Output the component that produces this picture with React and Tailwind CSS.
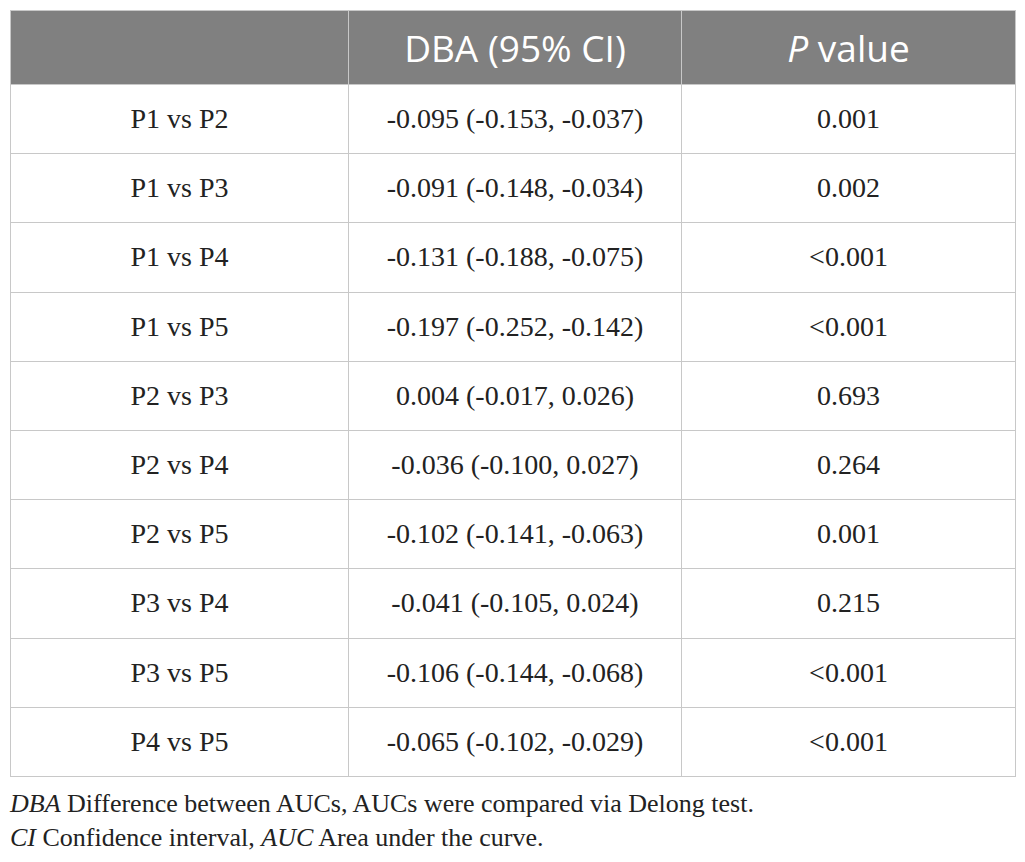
import React from "react";

const rows = [
  ["P1 vs P2", "-0.095 (-0.153, -0.037)", "0.001"],
  ["P1 vs P3", "-0.091 (-0.148, -0.034)", "0.002"],
  ["P1 vs P4", "-0.131 (-0.188, -0.075)", "<0.001"],
  ["P1 vs P5", "-0.197 (-0.252, -0.142)", "<0.001"],
  ["P2 vs P3", "0.004 (-0.017, 0.026)", "0.693"],
  ["P2 vs P4", "-0.036 (-0.100, 0.027)", "0.264"],
  ["P2 vs P5", "-0.102 (-0.141, -0.063)", "0.001"],
  ["P3 vs P4", "-0.041 (-0.105, 0.024)", "0.215"],
  ["P3 vs P5", "-0.106 (-0.144, -0.068)", "<0.001"],
  ["P4 vs P5", "-0.065 (-0.102, -0.029)", "<0.001"],
];

export default function App() {
  return (
    <div className="w-[1025px] h-[862px] bg-white pt-[10px] px-[10px] overflow-hidden">
      <table className="w-[1005px] border-collapse table-fixed">
        <colgroup>
          <col className="w-[338px]" />
          <col className="w-[333px]" />
          <col className="w-[334px]" />
        </colgroup>
        <thead>
          <tr className="h-[74px] bg-[#808080] text-white text-[37px] leading-none font-['Open_Sans',sans-serif]">
            <th className="border border-[#c8c8c8] font-normal"></th>
            <th className="border border-[#c8c8c8] font-normal">DBA (95% CI)</th>
            <th className="border border-[#c8c8c8] font-normal">
              <i>P</i> value
            </th>
          </tr>
        </thead>
        <tbody className="font-['Liberation_Serif',serif] text-[28px] leading-none text-[#222]">
          {rows.map((r) => (
            <tr key={r[0]} className="h-[69.2px]">
              <td className="border border-[#c8c8c8] text-center">{r[0]}</td>
              <td className="border border-[#c8c8c8] text-center">{r[1]}</td>
              <td className="border border-[#c8c8c8] text-center">{r[2]}</td>
            </tr>
          ))}
        </tbody>
      </table>
      <div className="mt-[10px] font-['Liberation_Serif',serif] text-[26px] leading-[34px] text-[#222]">
        <div>
          <i>DBA</i> Difference between AUCs, AUCs were compared via Delong test.
        </div>
        <div>
          <i>CI</i> Confidence interval, <i>AUC</i> Area under the curve.
        </div>
      </div>
    </div>
  );
}
